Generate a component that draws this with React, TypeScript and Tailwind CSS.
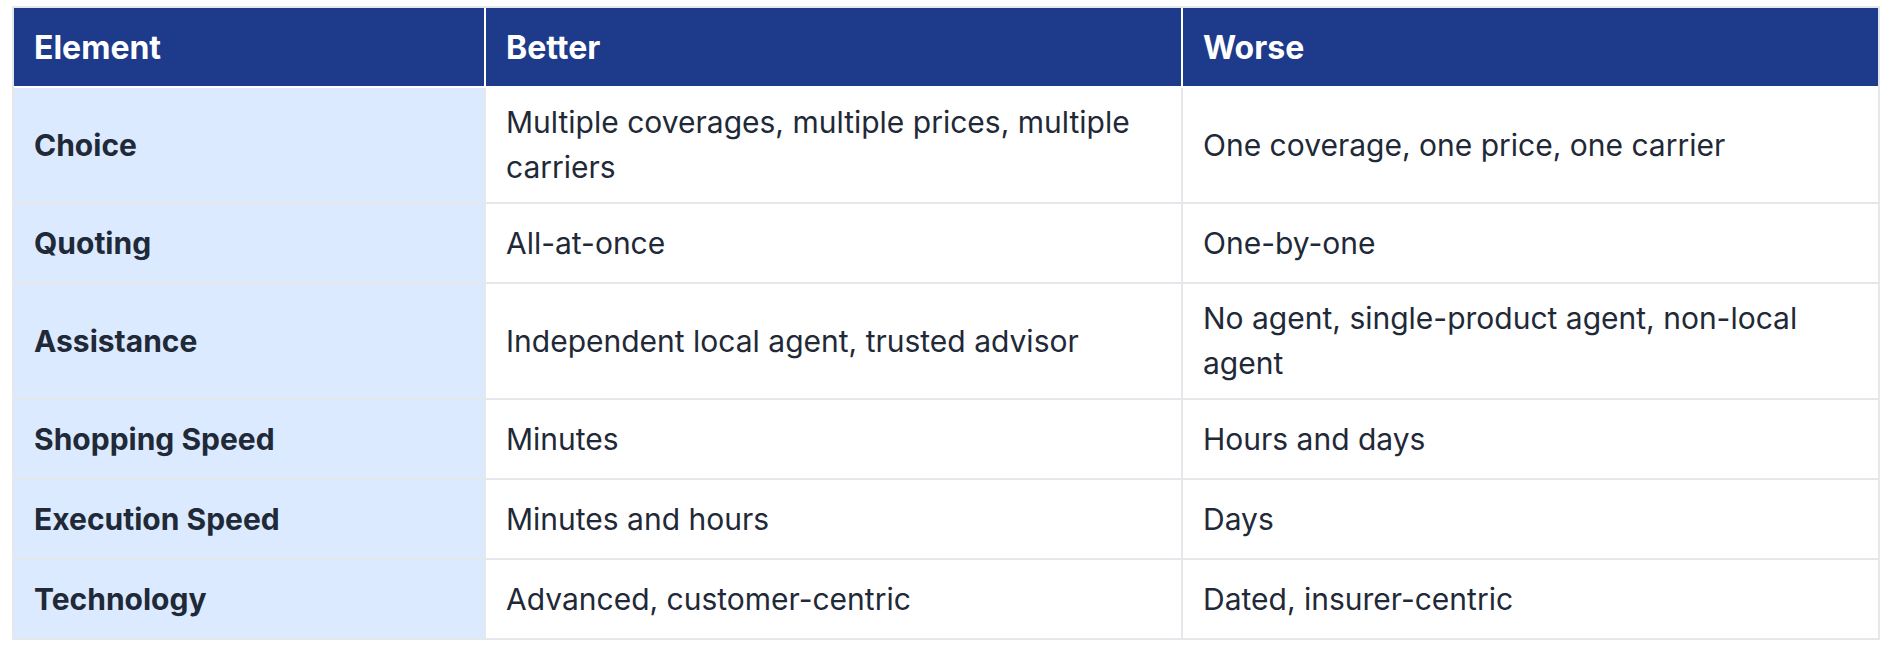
import React from "react";

const rows = [
  { el: "Choice", better: "Multiple coverages, multiple prices, multiple carriers", worse: "One coverage, one price, one carrier", tall: true },
  { el: "Quoting", better: "All-at-once", worse: "One-by-one" },
  { el: "Assistance", better: "Independent local agent, trusted advisor", worse: "No agent, single-product agent, non-local agent", tall: true },
  { el: "Shopping Speed", better: "Minutes", worse: "Hours and days" },
  { el: "Execution Speed", better: "Minutes and hours", worse: "Days" },
  { el: "Technology", better: "Advanced, customer-centric", worse: "Dated, insurer-centric" },
];

export default function App() {
  return (
    <div className="min-h-screen bg-white pl-3 pt-[6px] font-['Inter','Liberation_Sans',sans-serif] text-[30px] leading-[45px] text-[#1f2937]">
      <div className="w-[1868px] border-2 border-[#e5e7eb]">
        <div className="box-content grid h-[78px] grid-cols-[472px_697px_695px] border-b-2 border-white bg-[#1e3a8a] text-[32px] font-bold text-white">
          <div className="flex items-center border-r-2 border-white px-5">Element</div>
          <div className="flex items-center border-r-2 border-white px-5">Better</div>
          <div className="flex items-center px-5">Worse</div>
        </div>
        {rows.map((r, i) => (
          <div
            key={r.el}
            className={`grid grid-cols-[472px_697px_695px] ${r.tall ? "h-[114px]" : "h-[78px]"} ${i < rows.length - 1 ? "box-content border-b-2 border-[#e5e7eb]" : "box-content"}`}
          >
            <div className="flex items-center border-r-2 border-[#e5e7eb] bg-[#dbeafe] px-5 font-bold">{r.el}</div>
            <div className="flex items-center border-r-2 border-[#e5e7eb] px-5">{r.better}</div>
            <div className="flex items-center px-5">{r.worse}</div>
          </div>
        ))}
      </div>
    </div>
  );
}
